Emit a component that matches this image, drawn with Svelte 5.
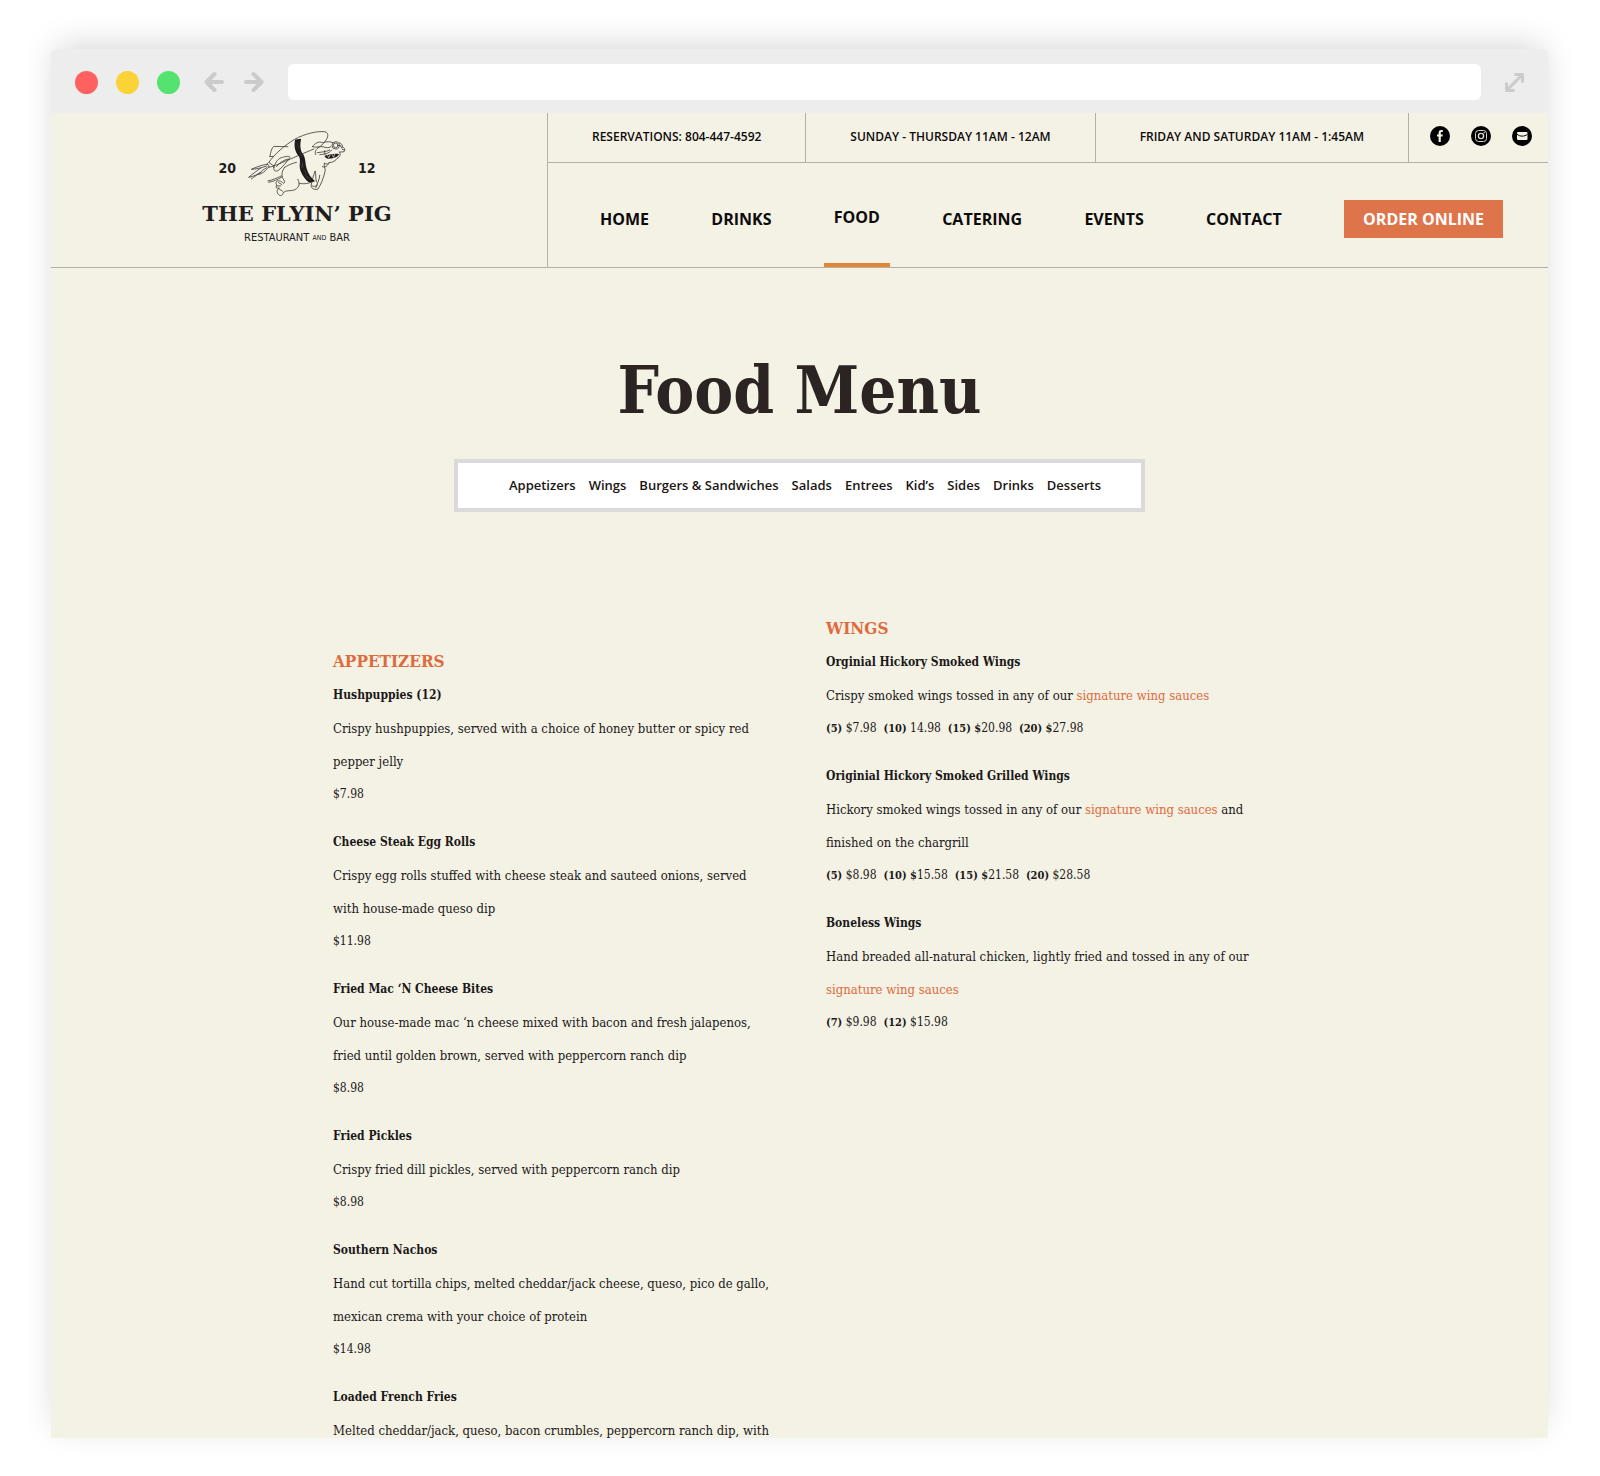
<script lang="ts">
  type Run = { text: string; bold?: boolean; href?: string };
  type Dish = { name: string; about: Run[]; price: Run[] };

  const NBSP = '\u00a0';

  const hours = [
    'RESERVATIONS: 804-447-4592',
    'SUNDAY - THURSDAY 11AM - 12AM',
    'FRIDAY AND SATURDAY 11AM - 1:45AM',
  ];
  const pages = ['HOME', 'DRINKS', 'FOOD', 'CATERING', 'EVENTS', 'CONTACT'];
  const current = 'FOOD';
  const sections = [
    'Appetizers',
    'Wings',
    'Burgers & Sandwiches',
    'Salads',
    'Entrees',
    'Kid’s',
    'Sides',
    'Drinks',
    'Desserts',
  ];

  const plain = (text: string): Run[] => [{ text }];
  const sauces: Run = { text: 'signature wing sauces', href: '#sauces' };

  const appetizers: Dish[] = [
    {
      name: 'Hushpuppies (12)',
      about: plain('Crispy hushpuppies, served with a choice of honey butter or spicy red pepper jelly'),
      price: plain('$7.98'),
    },
    {
      name: 'Cheese Steak Egg Rolls',
      about: plain('Crispy egg rolls stuffed with cheese steak and sauteed onions, served with house-made queso dip'),
      price: plain('$11.98'),
    },
    {
      name: 'Fried Mac ‘N Cheese Bites',
      about: plain(
        'Our house-made mac ‘n cheese mixed with bacon and fresh jalapenos, fried until golden brown, served with peppercorn ranch dip',
      ),
      price: plain('$8.98'),
    },
    {
      name: 'Fried Pickles',
      about: plain('Crispy fried dill pickles, served with peppercorn ranch dip'),
      price: plain('$8.98'),
    },
    {
      name: 'Southern Nachos',
      about: plain(
        'Hand cut tortilla chips, melted cheddar/jack cheese, queso, pico de gallo, mexican crema with your choice of protein',
      ),
      price: plain('$14.98'),
    },
    {
      name: 'Loaded French Fries',
      about: plain('Melted cheddar/jack, queso, bacon crumbles, peppercorn ranch dip, with'),
      price: [],
    },
  ];

  const wings: Dish[] = [
    {
      name: 'Orginial Hickory Smoked Wings',
      about: [{ text: 'Crispy smoked wings tossed in any of our ' }, sauces],
      price: [
        { text: '(5)', bold: true },
        { text: ` $7.98 ${NBSP}` },
        { text: '(10)', bold: true },
        { text: ` 14.98 ${NBSP}` },
        { text: '(15) $', bold: true },
        { text: `20.98 ${NBSP}` },
        { text: '(20) $', bold: true },
        { text: '27.98' },
      ],
    },
    {
      name: 'Originial Hickory Smoked Grilled Wings',
      about: [
        { text: 'Hickory smoked wings tossed in any of our ' },
        sauces,
        { text: ' and ' },
        { text: 'finished on the chargrill' },
      ],
      price: [
        { text: '(5)', bold: true },
        { text: ` $8.98 ${NBSP}` },
        { text: '(10) $', bold: true },
        { text: `15.58 ${NBSP}` },
        { text: '(15) $', bold: true },
        { text: `21.58 ${NBSP}` },
        { text: '(20)', bold: true },
        { text: ' $28.58' },
      ],
    },
    {
      name: 'Boneless Wings',
      about: [
        { text: 'Hand breaded all-natural chicken, lightly fried and tossed in any of our ' },
        sauces,
      ],
      price: [
        { text: '(7)', bold: true },
        { text: ` $9.98 ${NBSP}` },
        { text: '(12)', bold: true },
        { text: ' $15.98' },
      ],
    },
  ];
</script>

{#snippet runs(list: Run[])}
  {#each list as run}{#if run.href}<a class="sauce" href={run.href}>{run.text}</a>{:else if run.bold}<b>{run.text}</b>{:else}{run.text}{/if}{/each}
{/snippet}

{#snippet menu(title: string, dishes: Dish[])}
  <section class="menu">
    <h2>{title}</h2>
    {#each dishes as dish (dish.name)}
      <article class="dish">
        <h3>{dish.name}</h3>
        <p>{@render runs(dish.about)}</p>
        {#if dish.price.length}
          <p class="price">{@render runs(dish.price)}</p>
        {/if}
      </article>
    {/each}
  </section>
{/snippet}

<div class="desk">
  <div class="window">
    <div class="toolbar">
      <div class="lights">
        <button class="light red" type="button" aria-label="Close"></button>
        <button class="light yellow" type="button" aria-label="Minimize"></button>
        <button class="light green" type="button" aria-label="Zoom"></button>
      </div>
      <div class="arrows">
        <button class="tool" type="button" aria-label="Back">
          <svg width="20" height="22" viewBox="0 0 20 22"><path d="M18 11H3M10.500 3 2.500 11l8 8" /></svg>
        </button>
        <button class="tool" type="button" aria-label="Forward">
          <svg width="20" height="22" viewBox="0 0 20 22"><path d="M2 11H17M9.500 3 17.500 11l-8 8" /></svg>
        </button>
      </div>
      <input class="address" type="text" aria-label="Address" />
      <button class="tool thin" type="button" aria-label="Full screen">
        <svg width="19" height="19" viewBox="0 0 19 19">
          <path d="M2 17 17 2M9.500 1.500h8v8M9.500 17.500h-8v-8" />
        </svg>
      </button>
    </div>

    <header class="header">
      <a class="logo" href="#home" aria-label="The Flyin’ Pig">
        <span class="crest">
          <span class="year">20</span>
          <svg class="pig" width="98" height="70" viewBox="20 10 295 210" aria-hidden="true">
            <!-- rocket and flames -->
            <path d="M82 114C100 88 130 62 160 44 190 27 228 18 252 21 264 24 262 38 252 50 246 58 238 66 230 70" />
            <path d="M97 124C130 112 180 88 218 73M78 116 84 128 97 124M84 114 97 124" />
            <path d="M86 96C88 82 92 68 98 65 112 64 128 67 140 66M86 96 96 95" />
            <path d="M98 128C102 112 112 100 124 98 136 94 148 94 146 99 138 110 122 130 110 138 100 142 96 136 98 128Z" />
            <path d="M106 126C114 114 128 106 140 103" />
            <path d="M78 119C62 120 44 128 30 134 42 134 52 130 58 130M56 132C44 140 32 150 22 158 38 156 50 148 60 142M60 142C48 150 40 156 30 163M84 126C76 134 70 144 52 150M58 130 76 124M62 138 78 128" />
            <!-- tail and hind legs -->
            <path d="M80 169C94 166 108 160 120 154M82 173C96 171 110 165 122 157" />
            <path d="M130 128C120 142 120 156 128 166 132 172 130 176 126 176 120 168 108 166 105 172 102 178 108 180 106 184 102 190 108 192 114 190 106 196 106 204 112 210 118 216 126 212 126 204 134 196 150 200 160 196 168 192 174 186 174 178M112 174 122 180M112 192 124 200M106 184 118 184" />
            <path d="M130 128C140 122 152 116 166 113M176 176C190 180 204 176 218 170M174 178C173 172 172 168 170 164" />
            <!-- front leg and chest -->
            <path d="M222 140C216 154 212 170 210 184 212 194 222 196 230 194 240 180 248 158 252 140 254 128 246 124 250 116M222 140C226 150 222 160 226 172M236 152C236 164 228 176 224 190M214 184C220 188 226 184 230 180" />
            <path d="M250 116C256 120 262 118 264 114 274 114 284 108 290 100M244 126C252 130 260 124 264 114" />
            <!-- head, ear and snout -->
            <path d="M214 66C220 56 234 48 244 54 256 50 268 50 276 54M214 66C224 70 236 64 246 66 254 70 264 70 270 66M230 70C222 76 220 84 224 90" />
            <path d="M228 84C240 82 254 82 266 76M236 90C250 88 262 88 272 76M250 78 252 90" />
            <path d="M294 54C302 56 306 62 304 68 310 68 314 74 310 80 304 84 300 80 296 82M298 62 302 70M304 74 310 76M296 82C300 90 296 98 290 100" />
            <circle cx="284" cy="62" r="11" />
            <circle cx="284" cy="62" r="7" />
            <path class="fill" d="M250 94C262 90 278 86 294 88 290 98 276 102 262 102 256 102 252 98 250 94Z" />
            <path class="tooth" d="M260 93 263 99 267 92M274 90 277 98 281 89" />
            <!-- strap -->
            <path class="fill" d="M162 44C158 62 160 80 174 96 180 110 172 122 178 138 184 154 194 166 204 174L222 170C210 160 200 146 196 130 192 116 194 106 188 92 176 78 176 60 180 42Z" />
            <path class="grain" d="M168 56 172 70M176 82 182 96M182 112 186 128M190 136 196 150M200 156 208 166M184 120 180 130M192 150 200 162" />
          </svg>
          <span class="year">12</span>
        </span>
        <span class="name">THE FLYIN’ PIG</span>
        <span class="tagline">RESTAURANT <small>AND</small> BAR</span>
      </a>

      <div class="bars">
        <div class="strip">
          {#each hours as line (line)}
            <p class="hours">{line}</p>
          {/each}
          <div class="social">
            <a href="#facebook" aria-label="Facebook">
              <svg width="20" height="20" viewBox="0 0 20 20">
                <circle cx="10" cy="10" r="10" />
                <path fill="#f4f1e5" d="M8.600 16V10.500H7V8.400h1.600V7c0-2 1-3 2.700-3h1.500v2.100h-1c-.8 0-1 .4-1 1.100v1.200h2l-.3 2.100h-1.700V16z" />
              </svg>
            </a>
            <a href="#instagram" aria-label="Instagram">
              <svg width="20" height="20" viewBox="0 0 20 20" fill="none" stroke="#d8d4c8">
                <circle cx="10" cy="10" r="10" fill="#000" stroke="none" />
                <rect x="4.500" y="4.500" width="11" height="11" rx="3" />
                <circle cx="10" cy="10" r="2.600" stroke-width="1.400" />
                <circle cx="13.200" cy="6.800" r=".7" fill="#d8d4c8" stroke="none" />
              </svg>
            </a>
            <a href="#email" aria-label="Email">
              <svg width="20" height="20" viewBox="0 0 20 20">
                <circle cx="10" cy="10" r="10" />
                <rect x="5" y="6" width="10.500" height="8" rx="1" fill="#f4f1e5" />
                <path d="M5 8.200c3 2.600 7.500 2.600 10.500 0" fill="none" stroke="#000" />
              </svg>
            </a>
          </div>
        </div>
        <nav class="nav" aria-label="Main">
          {#each pages as page (page)}
            <a class="page" class:active={page === current} href="#{page.toLowerCase()}">{page}</a>
          {/each}
          <a class="order" href="#order">ORDER ONLINE</a>
        </nav>
      </div>
    </header>

    <main class="main">
      <h1>Food Menu</h1>
      <nav class="subnav" aria-label="Menu sections">
        {#each sections as section (section)}
          <a href="#{section.toLowerCase()}">{section}</a>
        {/each}
      </nav>
      <div class="menus">
        <div class="left">{@render menu('APPETIZERS', appetizers)}</div>
        <div>{@render menu('WINGS', wings)}</div>
      </div>
    </main>
  </div>
</div>

<style>
  :global(body) {
    background: #fff;
  }
  .desk {
    --paper: #f4f1e5;
    --line: #b3b0aa;
    --accent: #de6b3d;
    --slab: "DejaVu Serif Condensed", "DejaVu Serif", serif;
    --sans: "Open Sans", sans-serif;
    box-sizing: border-box;
    height: 100vh;
    padding: 49px 52px 38px 51px;
    overflow: hidden;
  }
  .window {
    height: 100%;
    overflow: hidden;
    border-radius: 6px 6px 0 0;
    background: var(--paper);
    box-shadow: 0 -8px 32px -6px rgba(0, 0, 0, 0.18);
    color: #1b1918;
    font-family: var(--slab);
  }
  a {
    color: inherit;
    text-decoration: none;
  }
  h1,
  h2,
  h3,
  p {
    margin: 0;
  }
  button {
    padding: 0;
    border: 0;
    background: none;
    cursor: pointer;
  }

  .toolbar {
    display: flex;
    align-items: center;
    gap: 24px;
    height: 62px;
    padding: 2px 24px 0;
    background: #ededed;
  }
  .lights {
    display: flex;
    gap: 18px;
  }
  .light {
    width: 23px;
    height: 23px;
    border-radius: 50%;
  }
  .red {
    background: #ff6161;
  }
  .yellow {
    background: #fad337;
  }
  .green {
    background: #55e370;
  }
  .arrows {
    display: flex;
    gap: 20px;
  }
  .tool {
    display: flex;
    color: #cbcbcb;
  }
  .tool path {
    fill: none;
    stroke: currentColor;
    stroke-width: 4;
    stroke-linecap: round;
    stroke-linejoin: round;
  }
  .thin path {
    stroke-width: 3;
    stroke-linecap: butt;
  }
  .address {
    flex: 1;
    height: 36px;
    padding: 0 12px;
    box-sizing: border-box;
    border: 0;
    border-radius: 6px;
    background: #fff;
    font: 14px var(--sans);
  }

  .header {
    display: flex;
    border-bottom: 1px solid var(--line);
    color: #0d0b0b;
    font-family: var(--sans);
  }
  .logo {
    display: flex;
    flex-direction: column;
    align-items: center;
    gap: 4px;
    width: 33.2%;
    box-sizing: border-box;
    padding: 15px 4px 0 0;
    border-right: 1px solid var(--line);
    color: #211d1c;
  }
  .crest {
    display: flex;
    align-items: center;
    gap: 12px;
  }
  .year {
    padding-top: 10px;
    font: bold 14px "DejaVu Sans Condensed", sans-serif;
  }
  .pig {
    fill: none;
    stroke: #3a3634;
    stroke-width: 2.400;
    stroke-linecap: round;
    stroke-linejoin: round;
  }
  .fill {
    fill: #1f1b1a;
    stroke: none;
  }
  .tooth {
    stroke: #f4f1e5;
    stroke-width: 2;
  }
  .grain {
    stroke: #77716d;
    stroke-width: 1;
  }
  .name {
    font: bold 21px/24px "DejaVu Serif", serif;
  }
  .tagline {
    font: 11px/16px "DejaVu Sans Condensed", sans-serif;
  }
  .tagline small {
    font-size: 7px;
    vertical-align: 1px;
  }

  .bars {
    flex: 1;
    display: flex;
    flex-direction: column;
  }
  .strip {
    display: flex;
    height: 49px;
    border-bottom: 1px solid var(--line);
  }
  .hours {
    flex: none;
    padding: 0 44px;
    border-right: 1px solid var(--line);
    font-size: 12px;
    font-weight: 600;
    line-height: 47px;
  }
  .social {
    flex: 1;
    display: flex;
    align-items: center;
    justify-content: flex-end;
    gap: 21px;
    padding: 0 16px 4px 0;
  }
  .social a {
    display: flex;
  }
  .nav {
    display: flex;
    justify-content: space-between;
    height: 104px;
    padding: 0 45px 0 42px;
    font-size: 16px;
    font-weight: 700;
  }
  .page {
    display: flex;
    align-items: center;
    padding: 8px 10px 0;
  }
  .active {
    border-bottom: 4px solid #e08638;
  }
  .order {
    align-self: center;
    margin: 8px 0 0 10px;
    padding: 0 19px;
    background: #de754a;
    color: #fff;
    line-height: 38px;
  }

  .main {
    display: flex;
    flex-direction: column;
    align-items: center;
    padding-top: 82px;
  }
  h1 {
    color: #2c2422;
    font-size: 65px;
    line-height: 80px;
  }
  .subnav {
    display: flex;
    gap: 13px;
    margin-top: 29px;
    padding: 0 40px 0 51px;
    border: 4px solid #dadadb;
    background: #fff;
    color: #1b1513;
    font: 600 13px/45px var(--sans);
  }
  .menus {
    display: grid;
    grid-template-columns: 1fr 1fr;
    gap: 53px;
    width: 100%;
    max-width: 933px;
    margin-top: 99px;
  }
  .left {
    padding-top: 33px;
  }
  h2 {
    color: var(--accent);
    font-size: 17px;
    line-height: 35px;
  }
  .dish {
    margin-bottom: 15px;
    font-size: 13px;
    line-height: 33px;
  }
  h3 {
    font-size: 12px;
    font-weight: 700;
  }
  .price {
    font-size: 12px;
  }
  .price b {
    font-size: 11px;
  }
  .sauce {
    color: var(--accent);
  }
</style>
